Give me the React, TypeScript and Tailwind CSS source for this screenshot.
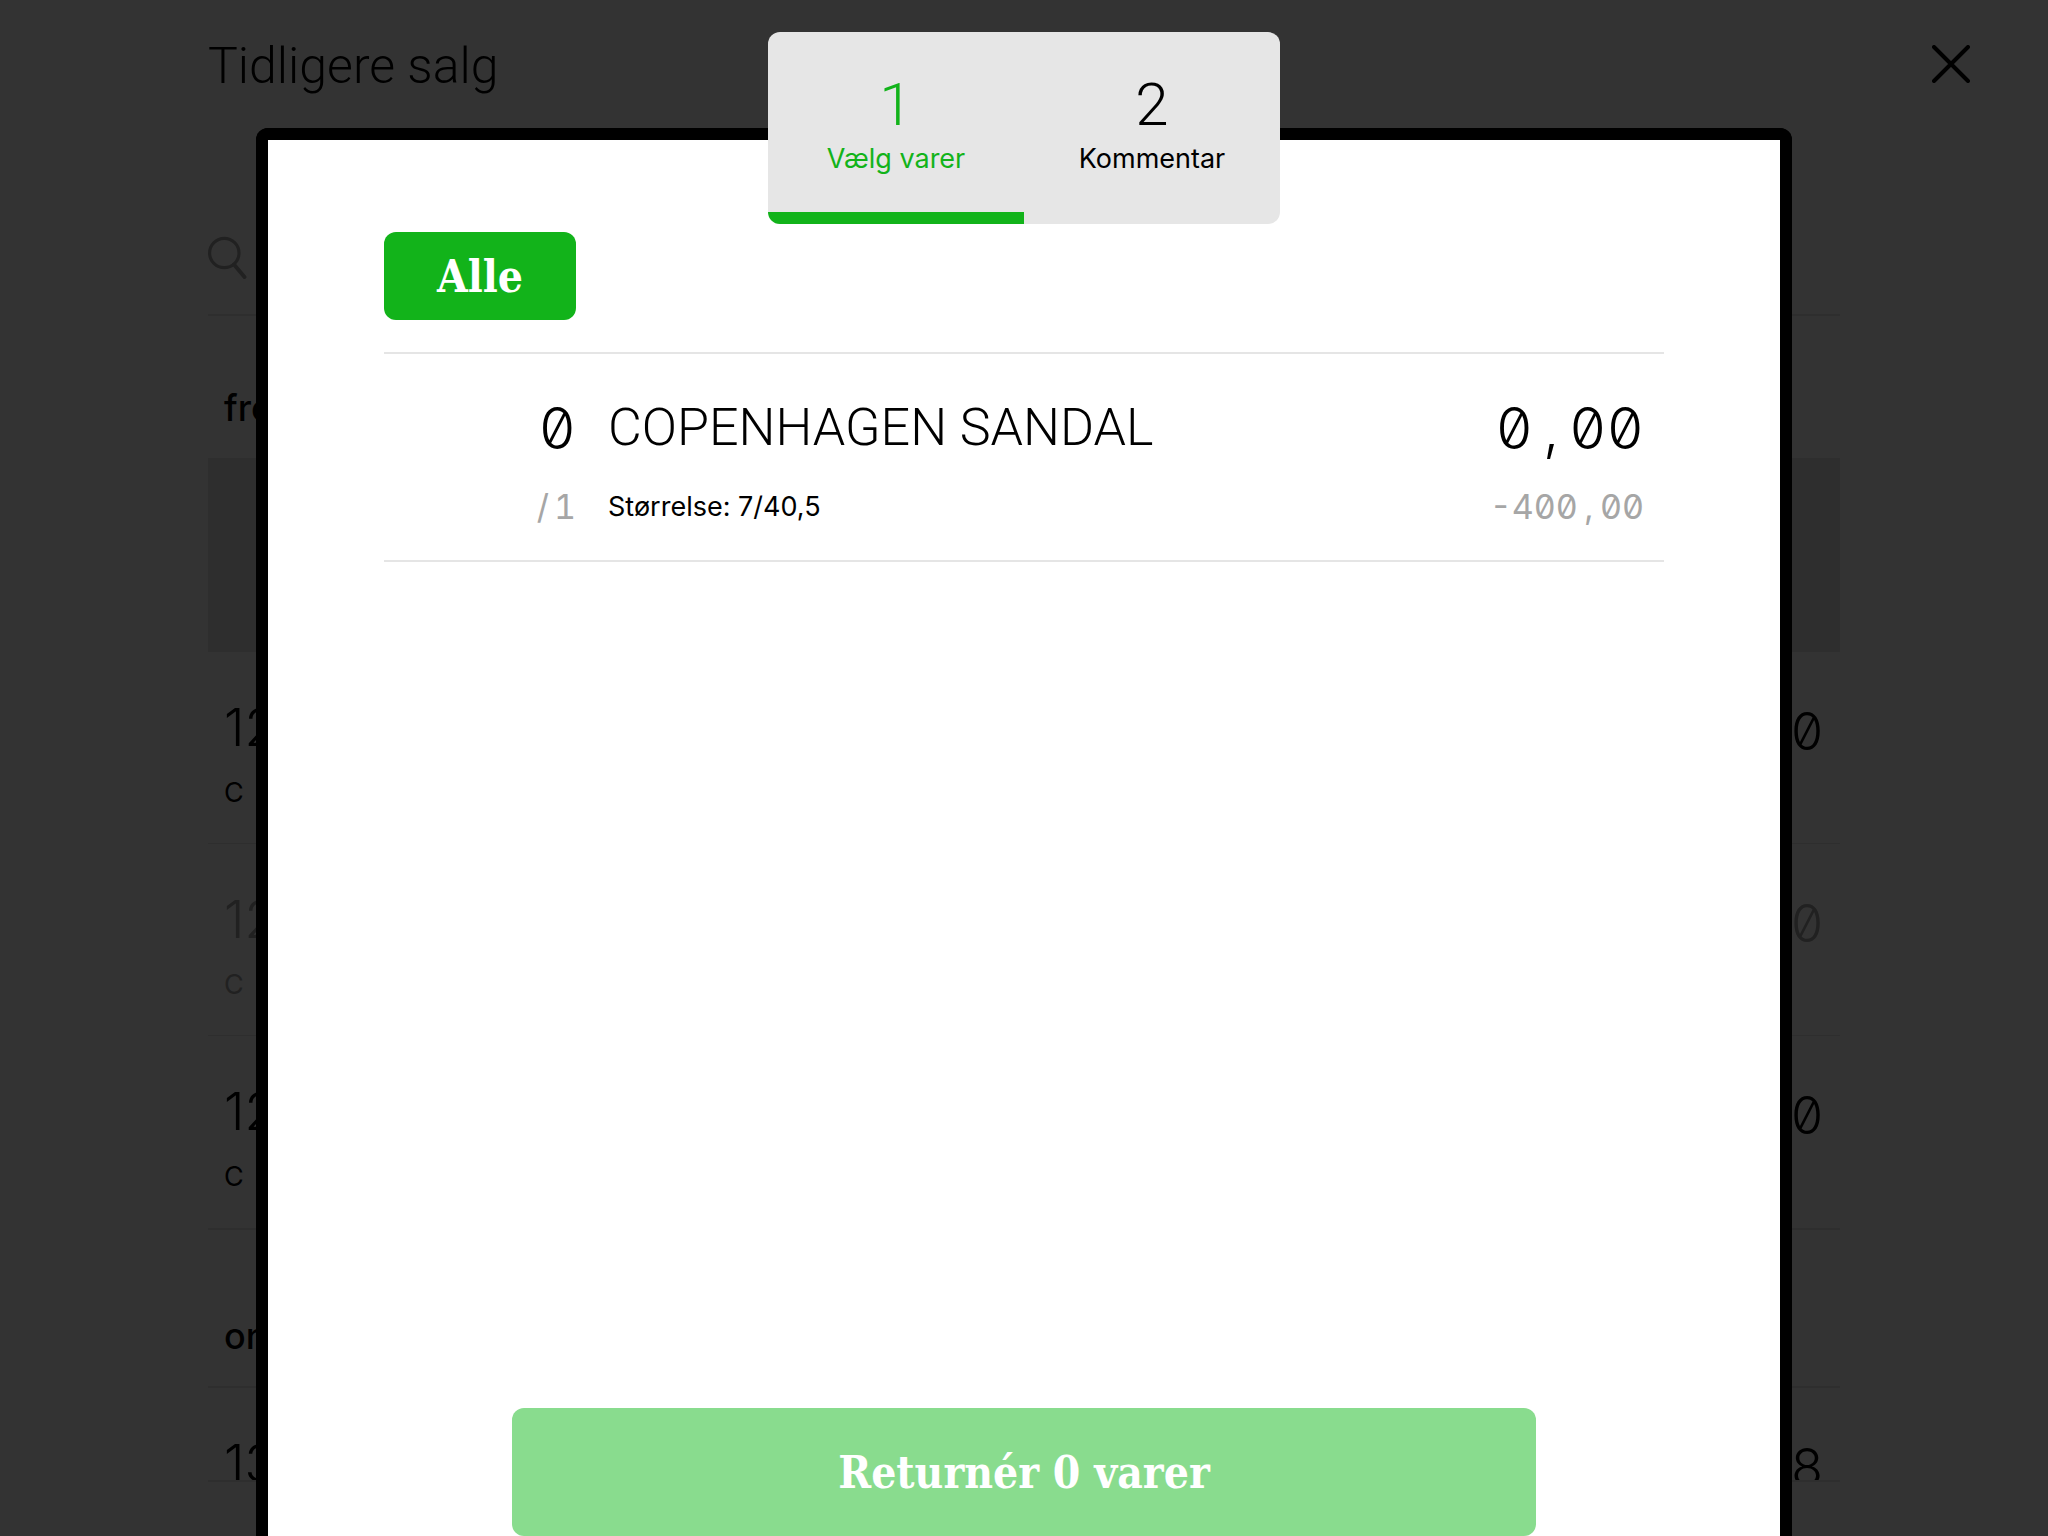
import { useState } from 'react'
import clsx from 'clsx'

type Sale = { time: string; initial: string; amount: string; dimmed?: boolean }

const sales: { day: string; hasSelected?: boolean; rows: Sale[] }[] = [
  {
    day: 'fre',
    hasSelected: true,
    rows: [
      { time: '12', initial: 'C', amount: '0' },
      { time: '12', initial: 'C', amount: '0', dimmed: true },
      { time: '12', initial: 'C', amount: '0' },
    ],
  },
  { day: 'on', rows: [{ time: '13', initial: '', amount: '8' }] },
]

const steps = [
  { id: 1, label: 'Vælg varer' },
  { id: 2, label: 'Kommentar' },
]

const items = [
  { name: 'COPENHAGEN SANDAL', size: 'Størrelse: 7/40,5', qty: '0', max: '1', total: '0,00', price: '-400,00' },
]

const mono = "[font-feature-settings:'tnum','zero']"
const display = "font-['Roboto',sans-serif] font-light"
const slab = "font-['DejaVu_Serif_Condensed','DejaVu_Serif',serif] text-[44px] leading-[56px] font-bold text-white"

// Decimal comma gets a full digit cell so amounts line up in columns
function Amount({ value, small }: { value: string; small?: boolean }) {
  const [whole, cents] = value.split(',')
  return (
    <span
      className={clsx(
        'whitespace-nowrap',
        mono,
        small ? 'text-[34px] leading-[42px] text-[#a6a6a6]' : 'text-[58px] leading-[84px] font-light'
      )}
    >
      {whole}
      <span className={clsx('inline-block text-center', small ? 'w-[22px]' : 'w-9')}>,</span>
      {cents}
    </span>
  )
}

function PreviousSales() {
  return (
    <div className="flex h-full flex-col bg-white">
      <header className="flex shrink-0 items-center justify-between pt-6 pr-[78px] pl-52">
        <h1 className={clsx('h-20 text-[50px] leading-[84px]', display)}>Tidligere salg</h1>
        <button type="button" aria-label="Luk">
          <svg width="38" height="38" viewBox="0 0 38 38" fill="none" stroke="currentColor" strokeWidth="4" strokeLinecap="round">
            <path d="M2 2l34 34M36 2L2 36" />
          </svg>
        </button>
      </header>

      <main className="mx-52 mt-24 mb-[54px] flex min-h-0 flex-1 flex-col border-b-2 border-[#e5e5e5]">
        <div className="flex h-[116px] shrink-0 items-center border-b-2 border-[#e5e5e5] text-[#a6a6a6]">
          <svg width="40" height="44" viewBox="0 0 40 44" fill="none" stroke="currentColor" strokeLinecap="round">
            <ellipse cx="16.3" cy="18" rx="14.7" ry="14.7" strokeWidth="3.2" />
            <path d="M26 29.500l10.500 12.500" strokeWidth="4" />
          </svg>
          <input type="search" aria-label="Søg" className="h-full flex-1 bg-transparent px-4 text-[36px] outline-none" />
        </div>

        <div className="min-h-0 flex-1 overflow-hidden">
          {sales.map((group) => (
            <section key={group.day} className="not-first:mt-3.5">
              <h2 className="flex h-36 items-end border-b-2 border-[#e5e5e5] px-4 pb-5 text-[36px] leading-[60px] font-medium">
                {group.day}
              </h2>
              {group.hasSelected && <div className="h-48 bg-[#e5e5e5]" />}
              {group.rows.map((sale, i) => (
                <div
                  key={i}
                  className={clsx(
                    'flex h-48 justify-between border-b border-[#e5e5e5] px-4 pt-11 last:h-[194px] last:border-b-2',
                    sale.dimmed && 'text-[#a6a6a6]'
                  )}
                >
                  <div className="flex flex-col gap-3">
                    <span className="text-[52px] leading-[64px] font-light">{sale.time}</span>
                    {sale.initial && <span className="text-[27px] leading-[42px]">{sale.initial}</span>}
                  </div>
                  <span className={clsx('text-[52px] leading-[72px] font-light', mono)}>{sale.amount}</span>
                </div>
              ))}
            </section>
          ))}
        </div>
      </main>
    </div>
  )
}

function ReturnDialog() {
  const [step, setStep] = useState(1)

  return (
    <div className="absolute inset-0 flex flex-col items-center bg-black/80 pt-8">
      <nav className="z-10 flex h-48 w-1/4 shrink-0 overflow-hidden rounded-xl bg-[#e6e6e6]">
        {steps.map((s) => (
          <button
            key={s.id}
            type="button"
            onClick={() => setStep(s.id)}
            className={clsx(
              'flex flex-1 flex-col items-center border-b-12 pt-10',
              s.id === step ? 'border-[#12b31a] text-[#12b31a]' : 'border-transparent'
            )}
          >
            <span className={clsx('text-[60px] leading-[66px]', display)}>{s.id}</span>
            <span className="text-[27px] leading-[42px]">{s.label}</span>
          </button>
        ))}
      </nav>

      <div
        role="dialog"
        aria-label="Returnér varer"
        className="-mt-24 flex w-3/4 flex-1 flex-col rounded-t-xl border-x-12 border-t-12 border-black bg-black"
      >
        <div className="flex flex-1 flex-col bg-white px-[116px] pt-[92px]">
          <button type="button" className={clsx('h-22 w-48 rounded-xl bg-[#12b31a] pt-0.5', slab)}>
            Alle
          </button>

          <ul className="mt-8 border-t-2 border-[#e5e5e5]">
            {items.map((item) => (
              <li key={item.name} className="flex gap-8 border-b-2 border-[#e5e5e5] pt-8 pr-5 pb-8">
                <div className={clsx('flex w-48 flex-col gap-4 text-right', mono)}>
                  <span className="text-[58px] leading-[84px] font-light">{item.qty}</span>
                  <span className="text-[34px] leading-[42px] text-[#a6a6a6]">
                    <span className="inline-block w-[22px] text-center">/</span>
                    {item.max}
                  </span>
                </div>
                <div className="flex flex-1 flex-col gap-4">
                  <span className={clsx('text-[52px] leading-[84px]', display)}>{item.name}</span>
                  <span className="text-[27px] leading-[42px]">{item.size}</span>
                </div>
                <div className="flex flex-col gap-4 text-right">
                  <Amount value={item.total} />
                  <Amount value={item.price} small />
                </div>
              </li>
            ))}
          </ul>

          <button type="button" disabled className={clsx('mx-32 mt-auto h-32 rounded-xl bg-[#89dc8e] pt-0.5', slab)}>
            Returnér 0 varer
          </button>
        </div>
      </div>
    </div>
  )
}

export default function App() {
  return (
    <div className="relative h-screen overflow-hidden font-['Inter',sans-serif] text-black">
      <PreviousSales />
      <ReturnDialog />
    </div>
  )
}
